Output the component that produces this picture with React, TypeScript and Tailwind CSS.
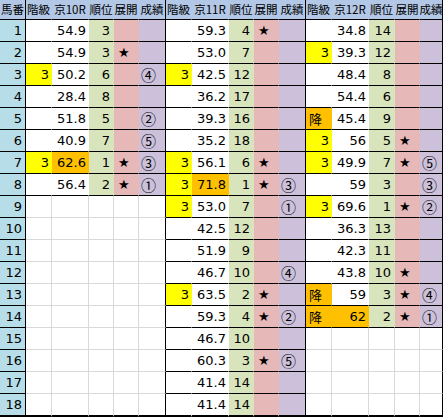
type Row = [string, string, string, string, string, boolean?];

const HEAD = ["階級", "", "順位", "展開", "成績"];

const races: { name: string; rows: Row[] }[] = [
  {
    name: "京10R",
    rows: [
      ["", "54.9", "3", "", ""],
      ["", "54.9", "3", "★", ""],
      ["3", "50.2", "6", "", "④"],
      ["", "28.4", "8", "", ""],
      ["", "51.8", "5", "", "②"],
      ["", "40.9", "7", "", "⑤"],
      ["3", "62.6", "1", "★", "③", true],
      ["", "56.4", "2", "★", "①"],
    ],
  },
  {
    name: "京11R",
    rows: [
      ["", "59.3", "4", "★", ""],
      ["", "53.0", "7", "", ""],
      ["3", "42.5", "12", "", ""],
      ["", "36.2", "17", "", ""],
      ["", "39.3", "16", "", ""],
      ["", "35.2", "18", "", ""],
      ["3", "56.1", "6", "★", ""],
      ["3", "71.8", "1", "★", "③", true],
      ["3", "53.0", "7", "", "①"],
      ["", "42.5", "12", "", ""],
      ["", "51.9", "9", "", ""],
      ["", "46.7", "10", "", "④"],
      ["3", "63.5", "2", "★", ""],
      ["", "59.3", "4", "★", "②"],
      ["", "46.7", "10", "", ""],
      ["", "60.3", "3", "★", "⑤"],
      ["", "41.4", "14", "", ""],
      ["", "41.4", "14", "", ""],
    ],
  },
  {
    name: "京12R",
    rows: [
      ["", "34.8", "14", "", ""],
      ["3", "39.3", "12", "", ""],
      ["", "48.4", "8", "", ""],
      ["", "54.4", "6", "", ""],
      ["降", "45.4", "9", "", ""],
      ["3", "56", "5", "★", ""],
      ["3", "49.9", "7", "★", "⑤"],
      ["", "59", "3", "", "③"],
      ["3", "69.6", "1", "★", "②"],
      ["", "36.3", "13", "", ""],
      ["", "42.3", "11", "", ""],
      ["", "43.8", "10", "★", ""],
      ["降", "59", "3", "★", "④"],
      ["降", "62", "2", "★", "①", true],
    ],
  },
];

const COLS =
  "grid-cols-[26px_26px_37px_25px_25px_27px_26px_37px_25px_25px_27px_26px_37px_26px_25px_23px]";

const colBg = ["", "", "bg-[#d8e4bc]", "bg-[#e6b8b7]", "bg-[#ccc0da]"];

function rowH(r: number) {
  return r === 18 ? "h-[23px] border-b-2" : "h-[22px] border-b";
}

function DataCell({ row, col, r }: { row?: Row; col: number; r: number }) {
  const last = col === 4;
  const filled = !!row;
  const right = last ? "border-r-black" : filled ? "border-r-transparent" : "border-r-[#d9d9d9]";
  const bottom = filled || r === 18 ? "border-b-black" : "border-b-[#d9d9d9]";
  let bg = filled ? colBg[col] : "";
  let align = "justify-end pr-[2px]";
  let font = "";
  const text = row ? row[col] : "";

  if (row && col === 0) {
    if (text === "3") bg = "bg-[#ffff00]";
    if (text === "降") {
      bg = "bg-[#ffc000]";
      align = "justify-start pl-[3px]";
      font = "font-['Noto_Sans_CJK_JP']";
    }
  }
  if (row && col === 1 && row[5]) bg = "bg-[#ffc000]";
  if (col === 2) align = "justify-end pr-[3px]";
  if (col === 3) align = "justify-start pl-[4px]";
  if (col === 4) {
    align = "justify-start pl-[2px]";
    font = "font-['Noto_Sans_CJK_JP'] text-[15px]";
  }

  return (
    <div className={`flex items-center border-r ${rowH(r)} ${right} ${bottom} ${bg} ${align} ${font}`}>
      {text}
    </div>
  );
}

export default function App() {
  const nums = Array.from({ length: 18 }, (_, i) => i + 1);

  return (
    <div className="h-[417px] w-[445px] overflow-hidden bg-white font-['DejaVu_Sans','Noto_Sans_CJK_JP',sans-serif] text-[13px] leading-none text-black">
      <div className={`grid w-[443px] ${COLS}`}>
        <div className="flex h-5 items-center justify-center border-r border-b border-black bg-[#b3c8e6] font-['Noto_Sans_CJK_JP'] text-[11.5px]">
          馬番
        </div>
        {races.map((race) =>
          HEAD.map((h, c) => (
            <div
              key={race.name + c}
              className={`flex h-5 items-center justify-center overflow-hidden whitespace-nowrap border-r border-b border-b-black bg-[#b3c8e6] font-['Noto_Sans_CJK_JP','DejaVu_Sans'] text-[11.5px] ${
                c === 4 ? "border-r-black" : "border-r-transparent"
              }`}
            >
              {c === 1 ? race.name : h}
            </div>
          ))
        )}

        {nums.map((r) => (
          <div key={r} className="contents">
            <div className={`flex items-center justify-end border-r border-black bg-[#b7dee8] pr-[3px] ${rowH(r)}`}>
              {r}
            </div>
            {races.map((race) =>
              [0, 1, 2, 3, 4].map((c) => (
                <DataCell key={race.name + c} row={race.rows[r - 1]} col={c} r={r} />
              ))
            )}
          </div>
        ))}
      </div>
    </div>
  );
}
